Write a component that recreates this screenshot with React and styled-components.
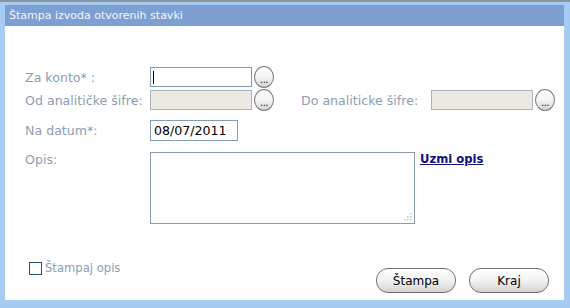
import React from "react";
import styled, { createGlobalStyle } from "styled-components";

const Global = createGlobalStyle`
  html, body { margin: 0; padding: 0; background: #fff; }
  body { font-family: "DejaVu Sans", Verdana, sans-serif; }
`;

const Frame = styled.div`
  width: 570px;
  height: 308px;
  box-sizing: border-box;
  border-top: 2px solid #8b939c;
  background: #a7ccf3;
  padding: 3px 6px 8px 5px;
  display: flex;
  flex-direction: column;
`;

const TitleBar = styled.div`
  height: 21px;
  background: #7e9fd2;
  color: #f4f6fb;
  font-size: 11px;
  line-height: 21px;
  padding-left: 4px;
`;

const Body = styled.div`
  flex: 1;
  background: #fff;
  padding: 40px 0 0 20px;
  display: flex;
  flex-direction: column;
  position: relative;
`;

const Row = styled.div`
  display: flex;
  align-items: center;
  height: ${(p) => p.$h || 22}px;
  margin-top: ${(p) => p.$mt || 0}px;
`;

const TopRow = styled(Row)`
  align-items: flex-start;
`;

const Label = styled.div`
  width: ${(p) => p.$w || 125}px;
  color: #8c9db2;
  font-size: 12.6px;
  white-space: nowrap;
  padding-top: ${(p) => p.$pt || 0}px;
`;

const Input = styled.div`
  box-sizing: border-box;
  width: ${(p) => p.$w || 102}px;
  height: ${(p) => p.$h || 20}px;
  border: 1px solid ${(p) => (p.$disabled ? "#a9b3bd" : "#7f9db9")};
  background: ${(p) => (p.$disabled ? "#ebe9e2" : "#fff")};
  font-size: 12.6px;
  color: #000;
  padding-left: 3px;
  line-height: 18px;
  display: flex;
  align-items: center;
`;

const Caret = styled.span`
  display: inline-block;
  width: 1px;
  height: 13px;
  background: #000;
  margin-left: -1px;
`;

const DotsButton = styled.div`
  box-sizing: border-box;
  width: 20px;
  height: 22px;
  margin-left: 2px;
  border: 1px solid #7b7b7b;
  border-radius: 50%;
  background: linear-gradient(#ffffff 0%, #f2f2f2 55%, #d4d4d4 100%);
  font-size: 10px;
  color: #222;
  display: flex;
  justify-content: center;
  align-items: flex-end;
  padding-bottom: 3px;
  line-height: 8px;
  letter-spacing: -0.5px;
`;

const Spacer = styled.div`
  width: ${(p) => p.$w}px;
`;

const TextArea = styled.div`
  box-sizing: border-box;
  width: 265px;
  height: 72px;
  border: 1px solid #8d9ca8;
  position: relative;
  background: #fff;
`;

const Grip = styled.svg`
  position: absolute;
  right: 2px;
  bottom: 2px;
`;

const Link = styled.a`
  color: #10107a;
  font-weight: bold;
  font-size: 11.6px;
  text-decoration: underline;
  margin-left: 5px;
  margin-top: 0px;
  cursor: pointer;
`;

const Footer = styled.div`
  display: flex;
  align-items: flex-start;
  margin-top: 36px;
  padding-left: 4px;
  padding-right: 15px;
`;

const CheckWrap = styled.label`
  display: flex;
  align-items: center;
  color: #8c9db2;
  font-size: 11.6px;
  margin-top: 1px;
`;

const Box = styled.span`
  box-sizing: border-box;
  width: 13px;
  height: 13px;
  border: 1px solid #2b4b6b;
  background: #fff;
  margin-right: 3px;
`;

const Buttons = styled.div`
  margin-left: auto;
  display: flex;
  gap: 13px;
  margin-top: 8px;
`;

const PillButton = styled.div`
  box-sizing: border-box;
  width: 80px;
  height: 25px;
  border: 1px solid #6f6f6f;
  border-radius: 12px;
  background: linear-gradient(#ffffff 0%, #f4f4f4 45%, #e0e0e0 80%, #cfcfcf 100%);
  display: flex;
  align-items: center;
  justify-content: center;
  font-size: 12px;
  color: #000;
`;

export default function App() {
  return (
    <>
      <Global />
      <Frame>
        <TitleBar>Štampa izvoda otvorenih stavki</TitleBar>
        <Body>
          <Row>
            <Label>Za konto* :</Label>
            <Input>
              <Caret />
            </Input>
            <DotsButton>...</DotsButton>
          </Row>
          <Row $mt={1}>
            <Label>Od analitičke šifre:</Label>
            <Input $disabled />
            <DotsButton>...</DotsButton>
            <Spacer $w={27} />
            <Label $w={130}>Do analiticke šifre:</Label>
            <Input $disabled />
            <DotsButton>...</DotsButton>
          </Row>
          <Row $mt={9} $h={21}>
            <Label>Na datum*:</Label>
            <Input $w={88} $h={21}>08/07/2011</Input>
          </Row>
          <TopRow $mt={11} $h={72}>
            <Label $pt={0}>Opis:</Label>
            <TextArea>
              <Grip width="9" height="9" viewBox="0 0 9 9">
                <g fill="#b8bcc0">
                  <rect x="7" y="1" width="1.4" height="1.4" />
                  <rect x="4" y="4" width="1.4" height="1.4" />
                  <rect x="7" y="4" width="1.4" height="1.4" />
                  <rect x="1" y="7" width="1.4" height="1.4" />
                  <rect x="4" y="7" width="1.4" height="1.4" />
                  <rect x="7" y="7" width="1.4" height="1.4" />
                </g>
              </Grip>
            </TextArea>
            <Link>Uzmi opis</Link>
          </TopRow>
          <Footer>
            <CheckWrap>
              <Box />
              Štampaj opis
            </CheckWrap>
            <Buttons>
              <PillButton>Štampa</PillButton>
              <PillButton>Kraj</PillButton>
            </Buttons>
          </Footer>
        </Body>
      </Frame>
    </>
  );
}
